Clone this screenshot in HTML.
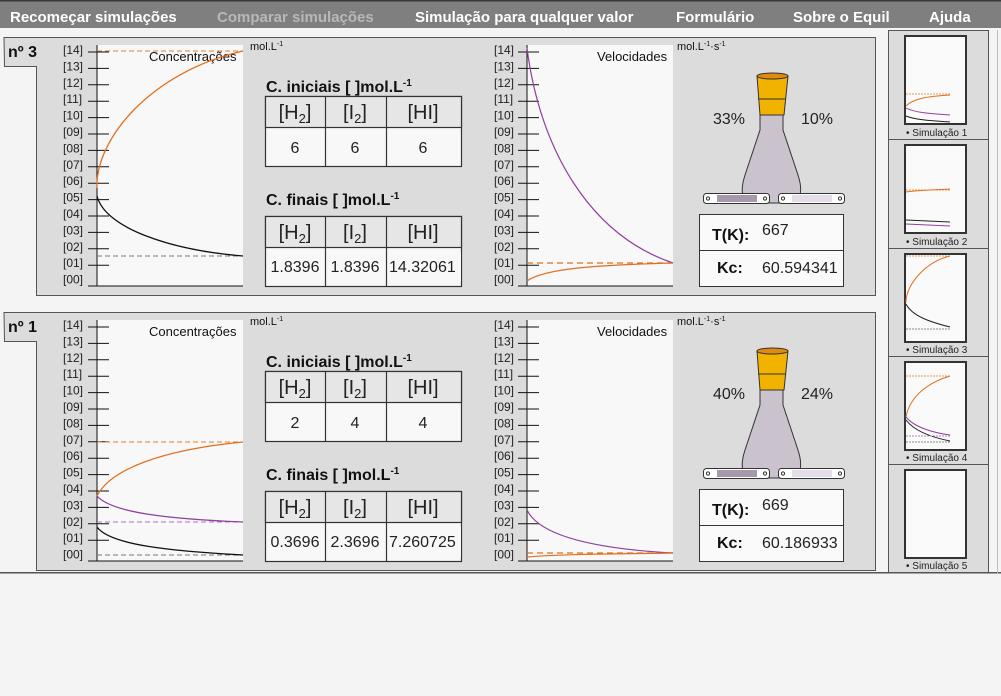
<!DOCTYPE html>
<html><head><meta charset="utf-8"><style>
html,body{margin:0;padding:0;background:#f4f4f4;}
svg{display:block;font-family:"Liberation Sans",Arial,sans-serif;}
.lb{font-size:12px;fill:#222;}
.nav{font-size:15px;font-weight:bold;fill:#fff;}
.h{font-size:16px;font-weight:bold;fill:#111;}
.th{font-size:20px;fill:#222;}
.td{font-size:16px;fill:#222;}
.sm{font-size:13px;fill:#111;}
</style></head><body>
<svg width="1001" height="696" viewBox="0 0 1001 696" xmlns="http://www.w3.org/2000/svg">
<defs>
<g id="ticks" stroke="#111" stroke-width="1">
<line x1="88" y1="52" x2="109" y2="52"/><line x1="88" y1="68.4" x2="109" y2="68.4"/><line x1="88" y1="84.8" x2="109" y2="84.8"/><line x1="88" y1="101.2" x2="109" y2="101.2"/><line x1="88" y1="117.6" x2="109" y2="117.6"/><line x1="88" y1="134" x2="109" y2="134"/><line x1="88" y1="150.4" x2="109" y2="150.4"/><line x1="88" y1="166.8" x2="109" y2="166.8"/><line x1="88" y1="183.2" x2="109" y2="183.2"/><line x1="88" y1="199.6" x2="109" y2="199.6"/><line x1="88" y1="216" x2="109" y2="216"/><line x1="88" y1="232.4" x2="109" y2="232.4"/><line x1="88" y1="248.8" x2="109" y2="248.8"/><line x1="88" y1="265.2" x2="109" y2="265.2"/><line x1="88" y1="286" x2="97" y2="286"/>
</g>
<g id="labels" class="lb">
<text x="63" y="54">[14]</text><text x="63" y="70.4">[13]</text><text x="63" y="86.8">[12]</text><text x="63" y="103.2">[11]</text><text x="63" y="119.6">[10]</text><text x="63" y="136">[09]</text><text x="63" y="152.4">[08]</text><text x="63" y="168.8">[07]</text><text x="63" y="185.2">[06]</text><text x="63" y="201.6">[05]</text><text x="63" y="218">[04]</text><text x="63" y="234.4">[03]</text><text x="63" y="250.8">[02]</text><text x="63" y="267.2">[01]</text><text x="63" y="283.6">[00]</text>
</g>
<g id="panel">
<path d="M4,37.5 H875.5 V295.5 H36.5 V66.5 H4.5 Z" fill="#dcdcdc" stroke="#555" stroke-width="1"/>
<rect x="97" y="45" width="146" height="241" fill="#f8f8f8"/>
<rect x="527" y="45" width="146" height="241" fill="#f8f8f8"/>
<use href="#labels"/><use href="#ticks"/>
<use href="#labels" x="431"/><use href="#ticks" x="430"/>
<line x1="97" y1="45" x2="97" y2="286" stroke="#111"/><line x1="97" y1="286" x2="243" y2="286" stroke="#111"/>
<line x1="527" y1="45" x2="527" y2="286" stroke="#111"/><line x1="527" y1="286" x2="673" y2="286" stroke="#111"/>
<text x="149" y="61" class="sm">Concentrações</text>
<text x="597" y="61" class="sm">Velocidades</text>
<text x="250" y="50" style="font-size:11px" fill="#111">mol.L<tspan dy="-4" style="font-size:7px">-1</tspan></text>
<text x="677" y="50" style="font-size:11px" fill="#111">mol.L<tspan dy="-4" style="font-size:7px">-1</tspan><tspan dy="4">·</tspan><tspan>s</tspan><tspan dy="-4" style="font-size:7px">-1</tspan></text>
<text x="266" y="92" class="h">C. iniciais [ ]mol.L<tspan dy="-6" style="font-size:10px">-1</tspan></text>
<text x="266" y="205" class="h">C. finais [ ]mol.L<tspan dy="-6" style="font-size:10px">-1</tspan></text>
<g stroke="#333" stroke-width="1.2">
<rect x="265.5" y="96.5" width="196" height="70" fill="#f8f8f8"/>
<rect x="265.5" y="96.5" width="196" height="31" fill="#e6e6e6"/>
<line x1="325.5" y1="96" x2="325.5" y2="166"/><line x1="386.5" y1="96" x2="386.5" y2="166"/>
<rect x="265.5" y="216.5" width="196" height="70" fill="#f8f8f8"/>
<rect x="265.5" y="216.5" width="196" height="31" fill="#e6e6e6"/>
<line x1="325.5" y1="216" x2="325.5" y2="286"/><line x1="386.5" y1="216" x2="386.5" y2="286"/>
</g>
<g class="th" text-anchor="middle">
<text x="295" y="119">[H<tspan dy="4" style="font-size:13px">2</tspan><tspan dy="-4">]</tspan></text>
<text x="355" y="119">[I<tspan dy="4" style="font-size:13px">2</tspan><tspan dy="-4">]</tspan></text>
<text x="423" y="119">[HI]</text>
<text x="295" y="239">[H<tspan dy="4" style="font-size:13px">2</tspan><tspan dy="-4">]</tspan></text>
<text x="355" y="239">[I<tspan dy="4" style="font-size:13px">2</tspan><tspan dy="-4">]</tspan></text>
<text x="423" y="239">[HI]</text>
</g>
<!-- flask -->
<path d="M760,115 L760,130 L745,175 Q737,200 752,203 L790,203 Q806,200 798,175 L783,130 L783,115 Z" fill="#cac2cc" stroke="#333"/>
<path d="M757,76 L788,76 L784,115 L760,115 Z" fill="#f2b200" stroke="#333"/>
<line x1="758" y1="99" x2="786" y2="99" stroke="#333"/>
<ellipse cx="772.5" cy="76" rx="15.5" ry="3" fill="#e08a10" stroke="#333"/>
<rect x="703.5" y="193.5" width="66" height="10" rx="3" fill="#fff" stroke="#333"/>
<rect x="778.5" y="193.5" width="66" height="10" rx="3" fill="#fff" stroke="#333"/>
<circle cx="708" cy="198.5" r="1.6" fill="none" stroke="#333"/><circle cx="765" cy="198.5" r="1.6" fill="none" stroke="#333"/>
<circle cx="783" cy="198.5" r="1.6" fill="none" stroke="#333"/><circle cx="840" cy="198.5" r="1.6" fill="none" stroke="#333"/>
<rect x="717" y="195" width="40" height="7" fill="#a898ab"/>
<rect x="792" y="195" width="40" height="7" fill="#e4dce6"/>
<rect x="699.5" y="214.5" width="144" height="72" fill="#fafafa" stroke="#333"/>
<line x1="699" y1="250.5" x2="843" y2="250.5" stroke="#333"/>
<text x="712" y="240" style="font-size:16px;font-weight:bold" fill="#111">T(K):</text>
<text x="717" y="273" style="font-size:16px;font-weight:bold" fill="#111">Kc:</text>
</g>
</defs>

<!-- nav -->
<rect x="0" y="0" width="1001" height="28" fill="#7f7f7f"/>
<rect x="0" y="0" width="1001" height="1.5" fill="#3a3a3a"/>
<text x="10" y="22" class="nav">Recomeçar simulações</text>
<text x="217" y="22" class="nav" style="fill:#b8b8b8">Comparar simulações</text>
<text x="415" y="22" class="nav">Simulação para qualquer valor</text>
<text x="676" y="22" class="nav">Formulário</text>
<text x="793" y="22" class="nav">Sobre o Equil</text>
<text x="929" y="22" class="nav">Ajuda</text>

<!-- panel 1 -->
<use href="#panel"/>
<text x="8" y="57" style="font-size:16px;font-weight:bold" fill="#111">nº 3</text>
<line x1="97" y1="51" x2="243" y2="51" stroke="#e08030" stroke-dasharray="5,3"/>
<line x1="97" y1="256" x2="243" y2="256" stroke="#777" stroke-dasharray="5,3"/>
<path d="M97,188 C95,140 150,72 243,51" fill="none" stroke="#e07020" stroke-width="1.3"/>
<path d="M97,196 C105,228 170,250 243,256" fill="none" stroke="#111" stroke-width="1.3"/>
<line x1="527" y1="263" x2="673" y2="263" stroke="#e07020" stroke-dasharray="6,4" stroke-width="1.3"/>
<path d="M527,48 C540,150 590,235 673,263" fill="none" stroke="#9040a0" stroke-width="1.2"/>
<path d="M527,281 C545,268 600,265 673,263" fill="none" stroke="#e07020" stroke-width="1.2"/>
<g class="td" text-anchor="middle"><text x="295" y="153">6</text><text x="355" y="153">6</text><text x="423" y="153">6</text>
<text x="295" y="272">1.8396</text><text x="355" y="272">1.8396</text></g>
<text x="389" y="272" class="td">14.32061</text><rect x="458" y="252" width="3" height="30" fill="#f8f8f8"/>
<text x="713" y="124" style="font-size:16px" fill="#222">33%</text>
<text x="801" y="124" style="font-size:16px" fill="#222">10%</text>
<text x="762" y="235" style="font-size:16px" fill="#222">667</text>
<text x="762" y="273" style="font-size:16px" fill="#222">60.594341</text>

<!-- panel 2 -->
<g transform="translate(0,275)">
<use href="#panel"/>
<text x="8" y="57" style="font-size:16px;font-weight:bold" fill="#111">nº 1</text>
<line x1="97" y1="167" x2="243" y2="167" stroke="#e08030" stroke-dasharray="5,3"/>
<line x1="97" y1="247" x2="243" y2="247" stroke="#b070c0" stroke-dasharray="5,3"/>
<line x1="97" y1="280" x2="243" y2="280" stroke="#777" stroke-dasharray="5,3"/>
<path d="M97,221 C110,195 160,175 243,167" fill="none" stroke="#e07020" stroke-width="1.3"/>
<path d="M97,221 C112,238 170,244 243,247" fill="none" stroke="#9040a0" stroke-width="1.3"/>
<path d="M97,252 C110,270 170,276 243,280" fill="none" stroke="#111" stroke-width="1.3"/>
<line x1="527" y1="278" x2="673" y2="278" stroke="#e07020" stroke-dasharray="6,4" stroke-width="1.3"/>
<path d="M527,235 C540,262 600,274 673,278" fill="none" stroke="#9040a0" stroke-width="1.2"/>
<path d="M527,282 C560,279 620,279 673,278" fill="none" stroke="#e07020" stroke-width="1.2"/>
<g class="td" text-anchor="middle"><text x="295" y="153">2</text><text x="355" y="153">4</text><text x="423" y="153">4</text>
<text x="295" y="272">0.3696</text><text x="355" y="272">2.3696</text></g>
<text x="389" y="272" class="td">7.260725</text><rect x="458" y="252" width="3" height="30" fill="#f8f8f8"/>
<text x="713" y="124" style="font-size:16px" fill="#222">40%</text>
<text x="801" y="124" style="font-size:16px" fill="#222">24%</text>
<text x="762" y="235" style="font-size:16px" fill="#222">669</text>
<text x="762" y="273" style="font-size:16px" fill="#222">60.186933</text>
</g>

<!-- bottom line -->
<rect x="0" y="572" width="1001" height="1.5" fill="#555"/>

<!-- sidebar -->
<rect x="888.5" y="30.5" width="100" height="542" fill="#dcdcdc" stroke="#555"/>
<line x1="997.5" y1="30" x2="997.5" y2="574" stroke="#bbb"/>
<g stroke="#555"><line x1="888" y1="139.5" x2="988" y2="139.5"/><line x1="888" y1="248.5" x2="988" y2="248.5"/><line x1="888" y1="356.5" x2="988" y2="356.5"/><line x1="888" y1="464.5" x2="988" y2="464.5"/></g>
<g fill="#fafafa" stroke="#333" stroke-width="2">
<rect x="905" y="36" width="61" height="88"/><rect x="905" y="145" width="61" height="88"/><rect x="905" y="254" width="61" height="88"/><rect x="905" y="362" width="61" height="88"/><rect x="905" y="470" width="61" height="88"/>
</g>
<g style="font-size:10px" fill="#222">
<text x="906" y="136">• Simulação 1</text><text x="906" y="245">• Simulação 2</text><text x="906" y="353">• Simulação 3</text><text x="906" y="461">• Simulação 4</text><text x="906" y="569">• Simulação 5</text>
</g>
<g fill="none" stroke-width="1">
<line x1="906" y1="94" x2="950" y2="94" stroke="#e0a050" stroke-dasharray="2,1"/>
<path d="M906,106 C915,97 935,96 950,95" stroke="#e07020"/>
<path d="M906,108 C915,113 935,114 950,115" stroke="#9040a0"/>
<path d="M906,116 C915,120 935,121 950,122" stroke="#222"/>
<line x1="906" y1="190" x2="950" y2="190" stroke="#e0a050" stroke-dasharray="2,1"/>
<path d="M906,192 C920,190 935,190 950,189" stroke="#e07020"/>
<path d="M906,220 L950,222" stroke="#222"/><path d="M906,224 L950,226" stroke="#9040a0"/>
<line x1="906" y1="256" x2="950" y2="256" stroke="#e0a050" stroke-dasharray="2,1"/>
<path d="M906,302 C906,285 925,262 950,256" stroke="#e07020"/>
<path d="M906,304 C912,316 930,322 950,327" stroke="#222"/>
<line x1="906" y1="329" x2="950" y2="329" stroke="#888" stroke-dasharray="2,1"/>
<line x1="906" y1="376" x2="950" y2="376" stroke="#e0a050" stroke-dasharray="2,1"/>
<path d="M906,417 C910,395 930,382 950,376" stroke="#e07020"/>
<path d="M906,417 C915,428 935,433 950,435" stroke="#9040a0"/>
<path d="M906,420 C915,432 935,438 950,441" stroke="#222"/>
<line x1="906" y1="436" x2="950" y2="436" stroke="#c080c0" stroke-dasharray="2,1"/>
<line x1="906" y1="442" x2="950" y2="442" stroke="#888" stroke-dasharray="2,1"/>
</g>
</svg>
</body></html>
